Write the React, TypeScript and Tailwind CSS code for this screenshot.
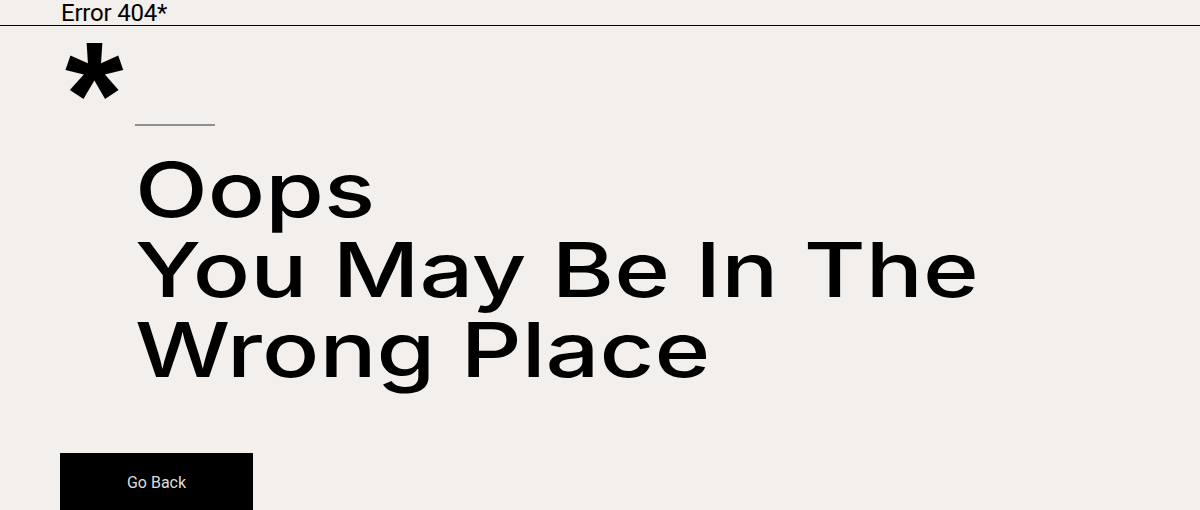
export default function App() {
  return (
    <div className="min-h-[510px] w-full bg-[#f2efec] text-black overflow-hidden">
      <header className="border-b border-black">
        <div className="pl-[61px] h-[25px] flex items-end">
          <span className="text-[24px] leading-[24px] tracking-[-0.2px] font-['Roboto',sans-serif]">Error 404*</span>
        </div>
      </header>
      <main className="pl-[60px]">
        <div className="h-[98px] pl-[5px] pt-[20px]">
          <span className="block text-[150px] leading-[98px] font-bold font-['Liberation_Sans',sans-serif]">*</span>
        </div>
        <div className="pl-[75px]">
          <div className="w-[80px] h-[2px] bg-[#8f8f8f]" />
          <h1 className="mt-[23px] origin-left scale-x-[1.25] text-[76px] leading-[80px] font-['Inter',sans-serif] font-medium">
            Oops
            <br />
            You May Be In The
            <br />
            Wrong Place
          </h1>
        </div>
        <button className="mt-[64px] w-[193px] h-[60px] bg-black text-[#dcdcdc] text-[16px] font-['Roboto',sans-serif]">
          Go Back
        </button>
      </main>
    </div>
  );
}
